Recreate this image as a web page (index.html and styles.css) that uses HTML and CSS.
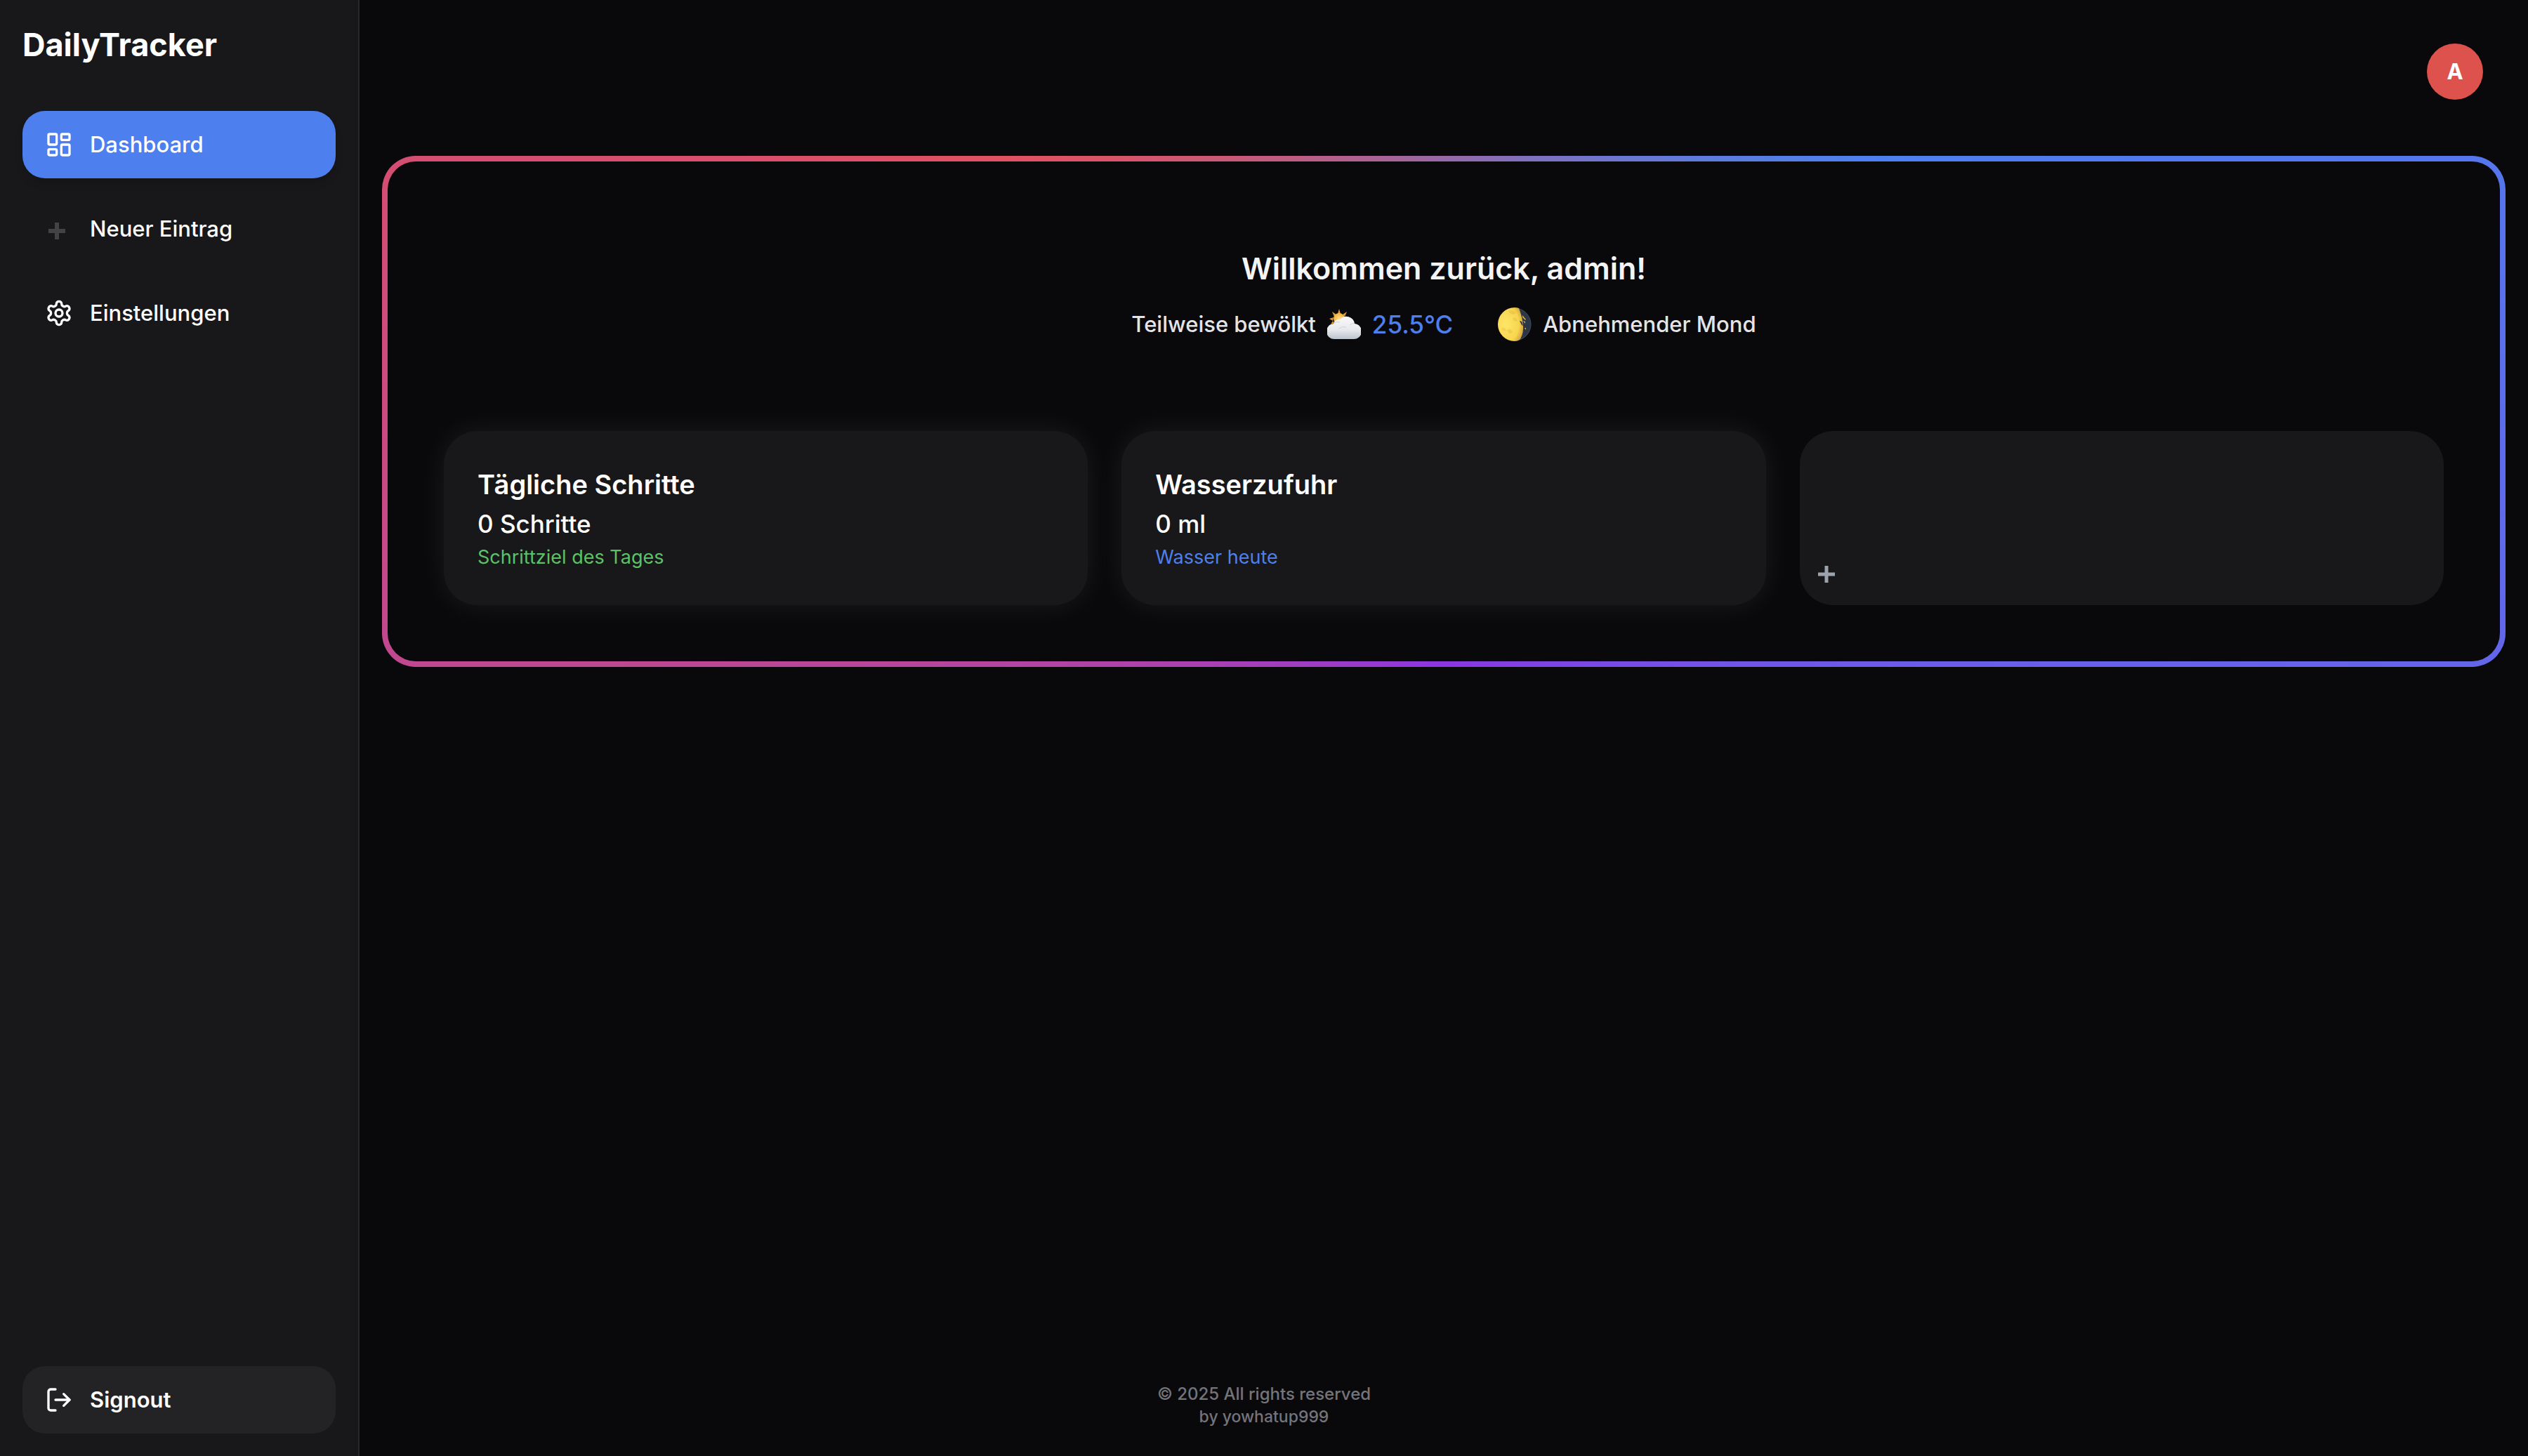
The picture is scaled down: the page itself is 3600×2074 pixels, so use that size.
FILE: index.html
```html
<!DOCTYPE html>
<html lang="de">
<head>
<meta charset="utf-8">
<meta name="viewport" content="width=device-width, initial-scale=1">
<title>DailyTracker</title>
<link rel="stylesheet" href="styles.css">
</head>
<body>
<div class="app">
  <aside class="sidebar">
    <div class="brand">DailyTracker</div>
    <nav class="nav">
      <a class="nav-item is-active" href="#dashboard">
        <svg class="icon" viewBox="0 0 24 24" aria-hidden="true"><rect x="3" y="3" width="7" height="9" rx="1"/><rect x="14" y="3" width="7" height="5" rx="1"/><rect x="14" y="12" width="7" height="9" rx="1"/><rect x="3" y="16" width="7" height="5" rx="1"/></svg>
        <span>Dashboard</span>
      </a>
      <a class="nav-item" href="#neu">
        <svg class="icon" viewBox="0 0 40 40" aria-hidden="true"><path class="plus-dark" d="M14 11h6v9h9v6h-9v9h-6v-9H5v-6h9z"/></svg>
        <span>Neuer Eintrag</span>
      </a>
      <a class="nav-item" href="#einstellungen">
        <svg class="icon" viewBox="0 0 24 24" aria-hidden="true"><path d="M12.22 2h-.44a2 2 0 0 0-2 2v.18a2 2 0 0 1-1 1.73l-.43.25a2 2 0 0 1-2 0l-.15-.08a2 2 0 0 0-2.73.73l-.22.38a2 2 0 0 0 .73 2.73l.15.1a2 2 0 0 1 1 1.72v.51a2 2 0 0 1-1 1.74l-.15.09a2 2 0 0 0-.73 2.73l.22.38a2 2 0 0 0 2.73.73l.15-.08a2 2 0 0 1 2 0l.43.25a2 2 0 0 1 1 1.73V20a2 2 0 0 0 2 2h.44a2 2 0 0 0 2-2v-.18a2 2 0 0 1 1-1.73l.43-.25a2 2 0 0 1 2 0l.15.08a2 2 0 0 0 2.73-.73l.22-.39a2 2 0 0 0-.73-2.73l-.15-.08a2 2 0 0 1-1-1.74v-.5a2 2 0 0 1 1-1.74l.15-.09a2 2 0 0 0 .73-2.73l-.22-.38a2 2 0 0 0-2.73-.73l-.15.08a2 2 0 0 1-2 0l-.43-.25a2 2 0 0 1-1-1.73V4a2 2 0 0 0-2-2z"/><circle cx="12" cy="12" r="3"/></svg>
        <span>Einstellungen</span>
      </a>
    </nav>
    <button class="nav-item signout" type="button">
      <svg class="icon" viewBox="0 0 24 24" aria-hidden="true"><path d="M9 3H5a2 2 0 0 0-2 2v14a2 2 0 0 0 2 2h4"/><path d="m16 7 5 5-5 5"/><path d="M21 12H9"/></svg>
      <span>Signout</span>
    </button>
  </aside>

  <main class="main">
    <header class="topbar">
      <button class="avatar" type="button" aria-label="Profil von admin">A</button>
    </header>

    <section class="panel">
      <div class="welcome">
        <h1 class="welcome-title">Willkommen zurück, admin!</h1>
        <div class="conditions">
          <div class="condition">
            <span>Teilweise bewölkt</span>
            <svg class="emoji" viewBox="0 0 48 48" role="img" aria-label="Sonne hinter Wolke">
              <defs>
                <linearGradient id="cloud" x1="0" y1="0" x2="0" y2="1"><stop offset="0" stop-color="#fafafb"/><stop offset=".6" stop-color="#e6e8ec"/><stop offset="1" stop-color="#bcc4cd"/></linearGradient>
                <radialGradient id="sun"><stop offset="0" stop-color="#ffe08a"/><stop offset="1" stop-color="#f3b03f"/></radialGradient>
              </defs>
              <path fill="#e29a2e" d="m17 2 2 7h-4zM7 6l6 4-3 3zM28 6l-3 7-3-3zM3 16l6-2-1 5zM5 24l3-5 2 3z"/>
              <circle cx="17" cy="16" r="8" fill="url(#sun)"/>
              <path fill="url(#cloud)" d="M11 45A11 11 0 0 1 9 23Q11 16 18 17A12 12 0 0 1 39 23A11 11 0 0 1 37 45Z"/>
              <path fill="none" stroke="#cfd3d9" stroke-width="1" d="M9 23q4-4 9-2M17 30q4-4 10-2M39 23q-4-1-7 2"/>
            </svg>
            <strong class="temperature">25.5°C</strong>
          </div>
          <div class="condition">
            <svg class="emoji" viewBox="0 0 48 48" role="img" aria-label="Abnehmender Mond">
              <defs>
                <radialGradient id="moon" cx=".3" cy=".5" r=".75"><stop offset="0" stop-color="#ffe566"/><stop offset=".7" stop-color="#f7d650"/><stop offset="1" stop-color="#cf9d3c"/></radialGradient>
              </defs>
              <circle cx="24" cy="24" r="23" fill="#2b3647" stroke="#48505c" stroke-width="1"/>
              <path fill="url(#moon)" d="M24 0a24 24 0 0 0 0 48q5 0 8-3 5-9 4-20T30 1q-3-1-6-1z"/>
              <path fill="#dfaf3b" d="M15 5q6-3 11 3-6 5-11-3zM21 15q5-2 7 4-5 2-7-4zM5 30q4-3 7 2-3 4-7-2zM13 32q5-3 8 3-5 5-8-3z" opacity=".35"/>
              <path fill="#2b3647" d="m31 19 3 1 2 6-2-1zM34 7l3 4v5l-2-4z"/>
              <path fill="#d9ae45" d="m35 11 5 6-1 1-4-4zM36 19l3 1v3zM38 29h2v3z"/>
            </svg>
            <span>Abnehmender Mond</span>
          </div>
        </div>
      </div>

      <div class="cards">
        <article class="card">
          <h2 class="card-title">Tägliche Schritte</h2>
          <p class="card-value">0 Schritte</p>
          <p class="card-note is-green">Schrittziel des Tages</p>
        </article>
        <article class="card">
          <h2 class="card-title">Wasserzufuhr</h2>
          <p class="card-value">0 ml</p>
          <p class="card-note is-blue">Wasser heute</p>
        </article>
        <button class="card-add" type="button" aria-label="Karte hinzufügen">
          <svg class="add-icon" viewBox="0 0 24 24" aria-hidden="true"><path d="M12 0v24M0 12h24"/></svg>
        </button>
      </div>
    </section>
  </main>

  <footer class="footer">
    <p class="footer-line">© 2025 All rights reserved</p>
    <p class="footer-line footer-author">by yowhatup999</p>
  </footer>
</div>
</body>
</html>
```
FILE: styles.css
```css
:root {
  --bg: #09090b;
  --surface: #18181a;
  --surface-raised: #232325;
  --line: #27272a;
  --blue: #4d80ee;
  --purple: #8a36e2;
  --red: #e05260;
  --green: #5cc267;
}

* {
  box-sizing: border-box;
}

body {
  margin: 0;
  background: var(--bg);
  color: #fff;
  font-family: Inter, "Liberation Sans", sans-serif;
  font-size: 31px;
  line-height: 48px;
}

h1,
h2,
p {
  margin: 0;
}

button {
  border: 0;
  color: inherit;
  font: inherit;
  cursor: pointer;
}

.app {
  display: grid;
  grid-template-columns: 512px minmax(0, 1fr);
  grid-template-rows: 1fr auto;
  min-height: 100vh;
}

/* Sidebar */

.sidebar {
  grid-column: 1;
  grid-row: 1 / 3;
  display: flex;
  flex-direction: column;
  padding: 32px;
  border-right: 2px solid var(--line);
  background: var(--surface);
}

.brand {
  margin-bottom: 62px;
  font-size: 45px;
  font-weight: 700;
  line-height: 64px;
}

.nav {
  display: flex;
  flex-direction: column;
  gap: 24px;
}

.nav-item {
  display: flex;
  align-items: center;
  gap: 24px;
  padding: 24px 32px;
  border-radius: 32px;
  color: #fff;
  font-weight: 500;
  text-align: left;
  text-decoration: none;
}

.nav-item.is-active {
  background: var(--blue);
  box-shadow: 0 8px 12px rgba(0, 0, 0, 0.12);
}

.signout {
  margin-top: auto;
  background: var(--surface-raised);
  font-weight: 600;
}

.icon {
  flex: none;
  width: 40px;
  height: 40px;
  fill: none;
  stroke: currentColor;
  stroke-width: 2;
  stroke-linecap: round;
  stroke-linejoin: round;
}

.plus-dark {
  fill: #434344;
  stroke: none;
}

/* Main area */

.main {
  grid-column: 2;
  grid-row: 1;
  padding: 0 32px;
}

.topbar {
  display: flex;
  justify-content: flex-end;
  padding: 62px 32px 80px;
}

.avatar {
  width: 80px;
  height: 80px;
  padding: 0;
  border-radius: 50%;
  background: #de524d;
  font-weight: 700;
}

.panel {
  padding: 120px 80px 80px;
  border: 8px solid transparent;
  border-radius: 48px;
  background:
    linear-gradient(var(--bg), var(--bg)) padding-box,
    conic-gradient(from 60deg, var(--blue), var(--purple), var(--red), var(--blue)) border-box;
}

.welcome {
  display: flex;
  flex-direction: column;
  align-items: center;
  gap: 16px;
  margin-bottom: 120px;
}

.welcome-title {
  color: #f4f4f5;
  font-size: 43px;
  font-weight: 600;
  line-height: 64px;
}

.conditions {
  display: flex;
  flex-wrap: wrap;
  justify-content: center;
  gap: 64px;
  color: #e4e4e7;
  font-weight: 500;
  line-height: 64px;
}

.condition {
  display: flex;
  align-items: center;
  gap: 16px;
}

.emoji {
  flex: none;
  width: 48px;
  height: 48px;
}

.temperature {
  color: var(--blue);
  font-size: 35px;
  font-weight: 500;
}

/* Cards */

.cards {
  display: grid;
  grid-template-columns: repeat(3, minmax(0, 1fr));
  gap: 48px;
}

.card {
  padding: 48px;
  border-radius: 48px;
  background: var(--surface);
  box-shadow: 0 0 40px rgba(255, 255, 255, 0.08);
}

.card-title {
  font-size: 38px;
  font-weight: 600;
  line-height: 56px;
}

.card-value {
  font-size: 35px;
  font-weight: 500;
  line-height: 56px;
}

.card-note {
  font-size: 27px;
  line-height: 40px;
}

.is-green {
  color: var(--green);
}

.is-blue {
  color: var(--blue);
}

.card-add {
  display: flex;
  align-items: flex-end;
  padding: 32px 26px;
  border-radius: 48px;
  background: var(--surface);
}

.add-icon {
  width: 24px;
  height: 24px;
  stroke: #9ca3af;
  stroke-width: 5;
}

/* Footer, centred on the whole window */

.footer {
  grid-column: 1 / 3;
  grid-row: 2;
  justify-self: center;
  padding-bottom: 40px;
  color: #74747b;
  font-weight: 500;
  text-align: center;
}

.footer-line {
  font-size: 24px;
  line-height: 32px;
}

.footer-author {
  font-size: 23px;
}
```
